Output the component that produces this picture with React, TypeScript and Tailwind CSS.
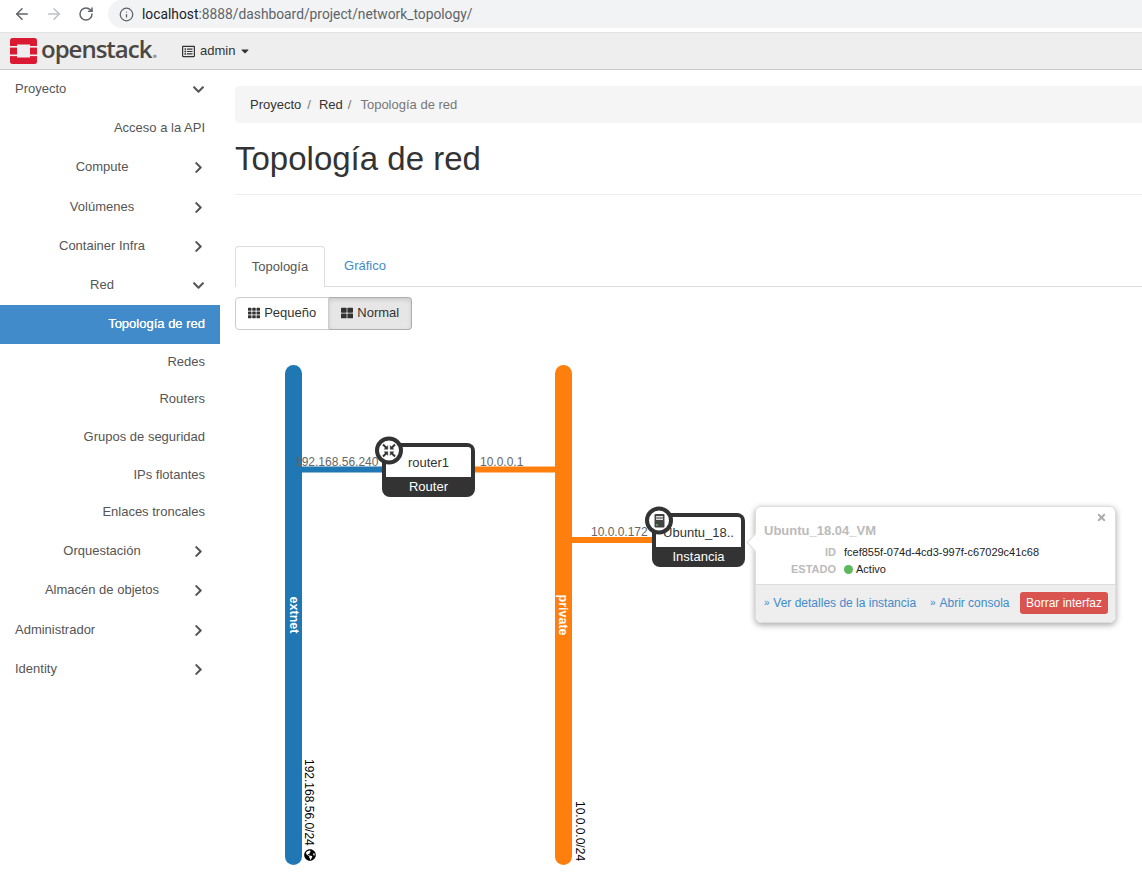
import { ArrowLeft, ArrowRight, RotateCw, Info } from "lucide-react";
import {
  FaCaretDown,
  FaChevronDown,
  FaChevronRight,
  FaGlobeAmericas,
  FaRegListAlt,
  FaTh,
  FaThLarge,
  FaTimes,
} from "react-icons/fa";

type NavItem = {
  label: string;
  h: string;
  align: "left" | "center" | "right";
  arrow?: "down" | "right";
  active?: boolean;
};

const nav: NavItem[] = [
  { label: "Proyecto", h: "h-[39px]", align: "left", arrow: "down" },
  { label: "Acceso a la API", h: "h-[39px]", align: "right" },
  { label: "Compute", h: "h-[40px]", align: "center", arrow: "right" },
  { label: "Volúmenes", h: "h-[39px]", align: "center", arrow: "right" },
  { label: "Container Infra", h: "h-[39px]", align: "center", arrow: "right" },
  { label: "Red", h: "h-[39px]", align: "center", arrow: "down" },
  { label: "Topología de red", h: "h-[39px]", align: "right", active: true },
  { label: "Redes", h: "h-[37px]", align: "right" },
  { label: "Routers", h: "h-[38px]", align: "right" },
  { label: "Grupos de seguridad", h: "h-[38px]", align: "right" },
  { label: "IPs flotantes", h: "h-[37px]", align: "right" },
  { label: "Enlaces troncales", h: "h-[38px]", align: "right" },
  { label: "Orquestación", h: "h-[39px]", align: "center", arrow: "right" },
  { label: "Almacén de objetos", h: "h-[40px]", align: "center", arrow: "right" },
  { label: "Administrador", h: "h-[39px]", align: "left", arrow: "right" },
  { label: "Identity", h: "h-[39px]", align: "left", arrow: "right" },
];

function Logo() {
  return (
    <svg width="27" height="26" viewBox="0 0 27 26">
      <rect x="0" y="0" width="27" height="26" rx="2.5" fill="#da1a32" />
      <rect x="7" y="6.5" width="13" height="13" fill="#eeeeee" />
      <rect x="0" y="8" width="7" height="1.6" fill="#eeeeee" />
      <rect x="0" y="16.5" width="7" height="1.6" fill="#eeeeee" />
      <rect x="20" y="8" width="7" height="1.6" fill="#eeeeee" />
      <rect x="20" y="16.5" width="7" height="1.6" fill="#eeeeee" />
    </svg>
  );
}

function Sidebar() {
  return (
    <aside className="w-[220px] shrink-0 text-[13px] text-[#555]">
      {nav.map((item) => (
        <div
          key={item.label}
          className={`flex items-center ${item.h} ${
            item.active ? "bg-[#428bca] text-white [text-shadow:0_0_0.4px_#fff]" : ""
          }`}
        >
          <div
            className={`${item.arrow ? "w-[189px]" : "w-[205px]"} ${
              item.align === "left"
                ? "pl-[15px] text-left"
                : item.align === "right"
                  ? "text-right"
                  : "pl-[15px] text-center"
            } whitespace-nowrap pb-[2px]`}
          >
            {item.label}
          </div>
          {item.arrow && (
            <div className="flex w-[18px] justify-center pb-[1px] text-[#555]">
              {item.arrow === "down" ? <FaChevronDown size={13} /> : <FaChevronRight size={13} />}
            </div>
          )}
        </div>
      ))}
    </aside>
  );
}

function NodeBox({
  x,
  y,
  name,
  kind,
  icon,
}: {
  x: number;
  y: number;
  name: string;
  kind: string;
  icon: React.ReactNode;
}) {
  return (
    <g transform={`translate(${x} ${y})`}>
      <rect x="0" y="0" width="93" height="54" rx="8" fill="#333333" />
      <rect x="4" y="4" width="85" height="30" rx="3" fill="#ffffff" />
      <rect x="4" y="24" width="85" height="10" fill="#ffffff" />
      <text x="46.5" y="24" textAnchor="middle" fontSize="13" fill="#333333">
        {name}
      </text>
      <text x="46.5" y="48" textAnchor="middle" fontSize="13" fill="#ffffff">
        {kind}
      </text>
      <circle cx="7" cy="7.5" r="12" fill="#ffffff" stroke="#333333" strokeWidth="4" />
      {icon}
    </g>
  );
}

function Topology() {
  return (
    <svg
      width="907"
      height="530"
      viewBox="235 345 907 530"
      className="block font-['Liberation_Sans',sans-serif]"
    >
      {/* links */}
      <rect x="295" y="466.5" width="90" height="6" fill="#1f77b4" />
      <rect x="472" y="466.5" width="90" height="6" fill="#ff7f0e" />
      <rect x="565" y="537" width="90" height="6" fill="#ff7f0e" />

      {/* networks */}
      <rect x="285" y="365" width="17" height="500" rx="8.5" fill="#1f77b4" />
      <rect x="555" y="365" width="17" height="500" rx="8.5" fill="#ff7f0e" />
      <text
        transform="translate(289.5 615) rotate(90)"
        textAnchor="middle"
        fontSize="12.5"
        fontWeight="700"
        fill="#ffffff"
      >
        extnet
      </text>
      <text
        transform="translate(558.5 615) rotate(90)"
        textAnchor="middle"
        fontSize="12.5"
        fontWeight="700"
        fill="#ffffff"
      >
        private
      </text>
      <text transform="translate(305 759) rotate(90)" fontSize="12" fill="#000000">
        192.168.56.0/24
      </text>
      <text transform="translate(576 801) rotate(90)" fontSize="12" fill="#000000">
        10.0.0.0/24
      </text>
      <FaGlobeAmericas x="304" y="849" size={12} color="#000000" />

      {/* port labels */}
      <text x="295" y="466" fontSize="12" fill="#666666">
        192.168.56.240
      </text>
      <text x="480" y="466" fontSize="12" fill="#666666">
        10.0.0.1
      </text>
      <text x="591" y="536" fontSize="12" fill="#666666">
        10.0.0.172
      </text>

      <NodeBox
        x={382}
        y={443}
        name="router1"
        kind="Router"
        icon={
          <g stroke="#333333" fill="#333333">
            <path d="M1 1.5 L4.5 5 M13 1.5 L9.5 5 M1 13.5 L4.5 10 M13 13.5 L9.5 10" strokeWidth="2" />
            <path d="M5.8 2.6 L5.8 6.3 L2.1 6.3 Z M8.2 2.6 L8.2 6.3 L11.9 6.3 Z M5.8 12.4 L5.8 8.7 L2.1 8.7 Z M8.2 12.4 L8.2 8.7 L11.9 8.7 Z" strokeWidth="0.4" />
          </g>
        }
      />
      <NodeBox
        x={652}
        y={513}
        name="Ubuntu_18.."
        kind="Instancia"
        icon={
          <g>
            <rect x="2.5" y="1" width="10" height="13.5" rx="1" fill="#444444" />
            <rect x="4" y="3" width="7" height="1.5" fill="#dddddd" />
            <rect x="4" y="5.5" width="7" height="1.5" fill="#dddddd" />
            <circle cx="5" cy="12" r="1.1" fill="#5cb85c" />
          </g>
        }
      />
    </svg>
  );
}

function Popover() {
  return (
    <div className="absolute left-[520px] top-[161px] h-[117px] w-[361px] rounded-md border border-[#ddd] bg-white text-[#333] shadow-[0_2px_6px_rgba(0,0,0,0.35)]">
      <div className="absolute left-[-7px] top-[29px] size-[13px] rotate-45 border-b border-l border-[#ddd] bg-white" />
      <FaTimes size={11} className="absolute right-[8px] top-[5px] text-[#aaa]" />
      <div className="relative h-[77px] px-[8px] pt-[16px]">
        <div className="text-[13px] font-bold leading-4 text-[#bbb]">Ubuntu_18.04_VM</div>
        <div className="mt-[5px] flex h-[17px] items-center text-[11px]">
          <div className="w-[72px] text-right font-bold text-[#bbb]">ID</div>
          <div className="ml-[8px] text-[#222]">fcef855f-074d-4cd3-997f-c67029c41c68</div>
        </div>
        <div className="flex h-[17px] items-center text-[11px]">
          <div className="w-[72px] text-right font-bold text-[#bbb]">ESTADO</div>
          <div className="ml-[8px] flex items-center gap-[3px] text-[#222]">
            <span className="size-[9px] rounded-full bg-[#5cb85c]" />
            Activo
          </div>
        </div>
      </div>
      <div className="flex h-[38px] items-center rounded-b-md border-t border-[#ddd] bg-[#eeeeee] pb-[2px] pl-[8px] pr-[7px] text-[12px] text-[#428bca]">
        <span className="text-[10px]">»&nbsp;</span>
        <span className="ml-[1px]">Ver detalles de la instancia</span>
        <span className="ml-[14px] text-[10px]">»&nbsp;</span>
        <span className="ml-[1px]">Abrir consola</span>
        <span className="ml-auto flex h-[22px] items-center rounded-[3px] bg-[#d9534f] px-[6px] text-white">
          Borrar interfaz
        </span>
      </div>
    </div>
  );
}

export default function App() {
  return (
    <div className="flex h-[882px] w-[1142px] flex-col overflow-hidden bg-white font-['Liberation_Sans',sans-serif]">
      {/* browser bar */}
      <div className="flex h-[33px] shrink-0 items-start border-b border-[#e3e3e3] bg-white pl-[13px]">
        <ArrowLeft size={18} strokeWidth={2} className="mt-[5px] text-[#5f6368]" />
        <ArrowRight size={18} strokeWidth={2} className="ml-[14px] mt-[5px] text-[#bdc1c6]" />
        <RotateCw size={16} strokeWidth={2.2} className="ml-[15px] mt-[6px] text-[#5f6368]" />
        <div className="ml-[14px] flex h-[28px] flex-1 items-center rounded-l-[14px] bg-[#f1f3f4] pl-[11px] font-['Roboto',sans-serif] text-[13.8px]">
          <Info size={15} className="text-[#5f6368]" />
          <span className="ml-[8px] text-[#202124]">localhost</span>
          <span className="text-[#5f6368]">:8888/dashboard/project/network_topology/</span>
        </div>
      </div>

      {/* navbar */}
      <div className="flex h-[37px] shrink-0 items-center border-b border-[#c8c8c8] bg-[#eeeeee] pl-[10px]">
        <Logo />
        <span className="ml-[4px] pb-[5px] font-['Open_Sans',sans-serif] text-[24px] font-semibold leading-none tracking-[-1px] text-[#4b4743]">
          openstack<span className="text-[#999]">.</span>
        </span>
        <FaRegListAlt size={13} className="ml-[25px] text-[#333]" />
        <span className="ml-[5px] text-[13px] text-[#333]">admin</span>
        <FaCaretDown size={12} className="ml-[4px] text-[#333]" />
      </div>

      <div className="flex min-h-0 flex-1">
        <Sidebar />
        <main className="min-w-0 flex-1 pl-[15px] pt-[16px]">
          <div className="flex h-[37px] items-center rounded-l bg-[#f5f5f5] pl-[15px] text-[13px] text-[#333]">
            <span>Proyecto</span>
            <span className="ml-[6px] text-[#777]">/</span>
            <span className="ml-[8px]">Red</span>
            <span className="ml-[5px] text-[#777]">/</span>
            <span className="ml-[9px] text-[#777]">Topología de red</span>
          </div>
          <h1 className="mt-[16px] text-[33px] font-normal leading-[40px] text-[#333]">Topología de red</h1>
          <div className="mt-[15px] h-px bg-[#eeeeee]" />

          <div className="mt-[51px] flex h-[41px] border-b border-[#ddd] text-[13px]">
            <div className="flex h-[41px] w-[90px] items-center justify-center rounded-t border border-b-0 border-[#ddd] bg-white text-[#555]">
              Topología
            </div>
            <div className="ml-[1px] flex w-[78px] items-center justify-center text-[#428bca]">Gráfico</div>
          </div>

          <div className="mt-[10px] flex h-[33px] w-[177px] text-[13px] text-[#333]">
            <div className="flex w-[95px] items-center justify-center gap-[4px] rounded-l border border-[#ccc] bg-white pb-[1px]">
              <FaTh size={12} />
              Pequeño
            </div>
            <div className="flex w-[83px] items-center justify-center gap-[4px] rounded-r border border-l-0 border-[#adadad] bg-[#e6e6e6] pb-[1px] shadow-[inset_0_2px_4px_rgba(0,0,0,0.12)]">
              <FaThLarge size={12} />
              Normal
            </div>
          </div>

          <div className="relative mt-[15px]">
            <Topology />
            <Popover />
          </div>
        </main>
      </div>
    </div>
  );
}
